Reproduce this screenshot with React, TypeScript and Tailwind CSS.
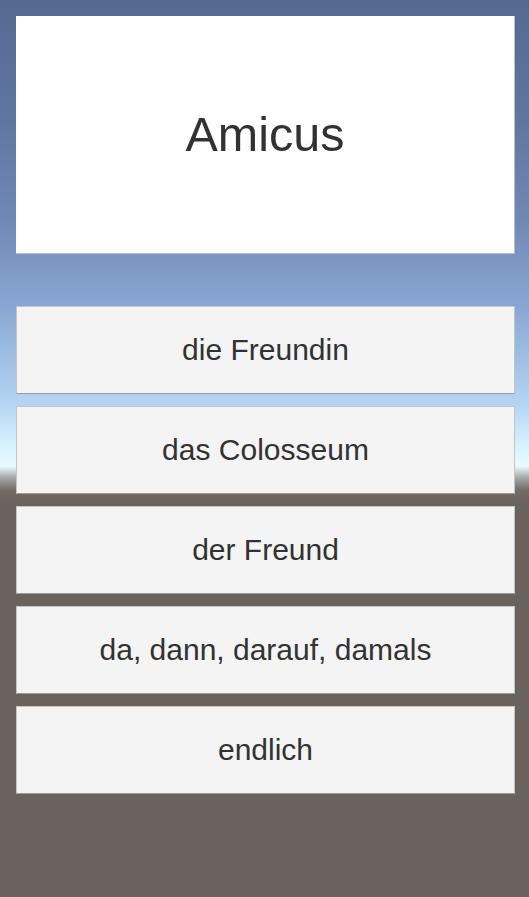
import React from 'react';

const answers = ['die Freundin', 'das Colosseum', 'der Freund', 'da, dann, darauf, damals', 'endlich'];

const App: React.FC = () => {
  return (
    <div className="h-[897px] w-full overflow-hidden bg-[linear-gradient(180deg,#566a90_0px,#5f76a0_120px,#7089b4_220px,#8aa8d3_310px,#b5d5f3_405px,#d6f2ff_445px,#e8fcff_466px,#a4a6a5_478px,#736b66_490px,#6a625d_504px,#6a625d_897px)] pl-4 pr-[14px] pt-4 font-['Liberation_Sans',Arial,sans-serif] text-[#323232]">
      <div className="flex h-[238px] items-center justify-center border-b border-r border-[#b9bec8] bg-white">
        <span className="text-[48.5px] leading-none">Amicus</span>
      </div>

      <div className="mt-[52px] flex flex-col gap-3">
        {answers.map((a) => (
          <button
            key={a}
            className="flex h-[88px] w-full items-center justify-center border border-[#c4c4c4] border-b-[#9a9a9a] bg-[#f4f4f4] text-[30px] leading-none text-[#323232]"
          >
            {a}
          </button>
        ))}
      </div>
    </div>
  );
};

export default App;
